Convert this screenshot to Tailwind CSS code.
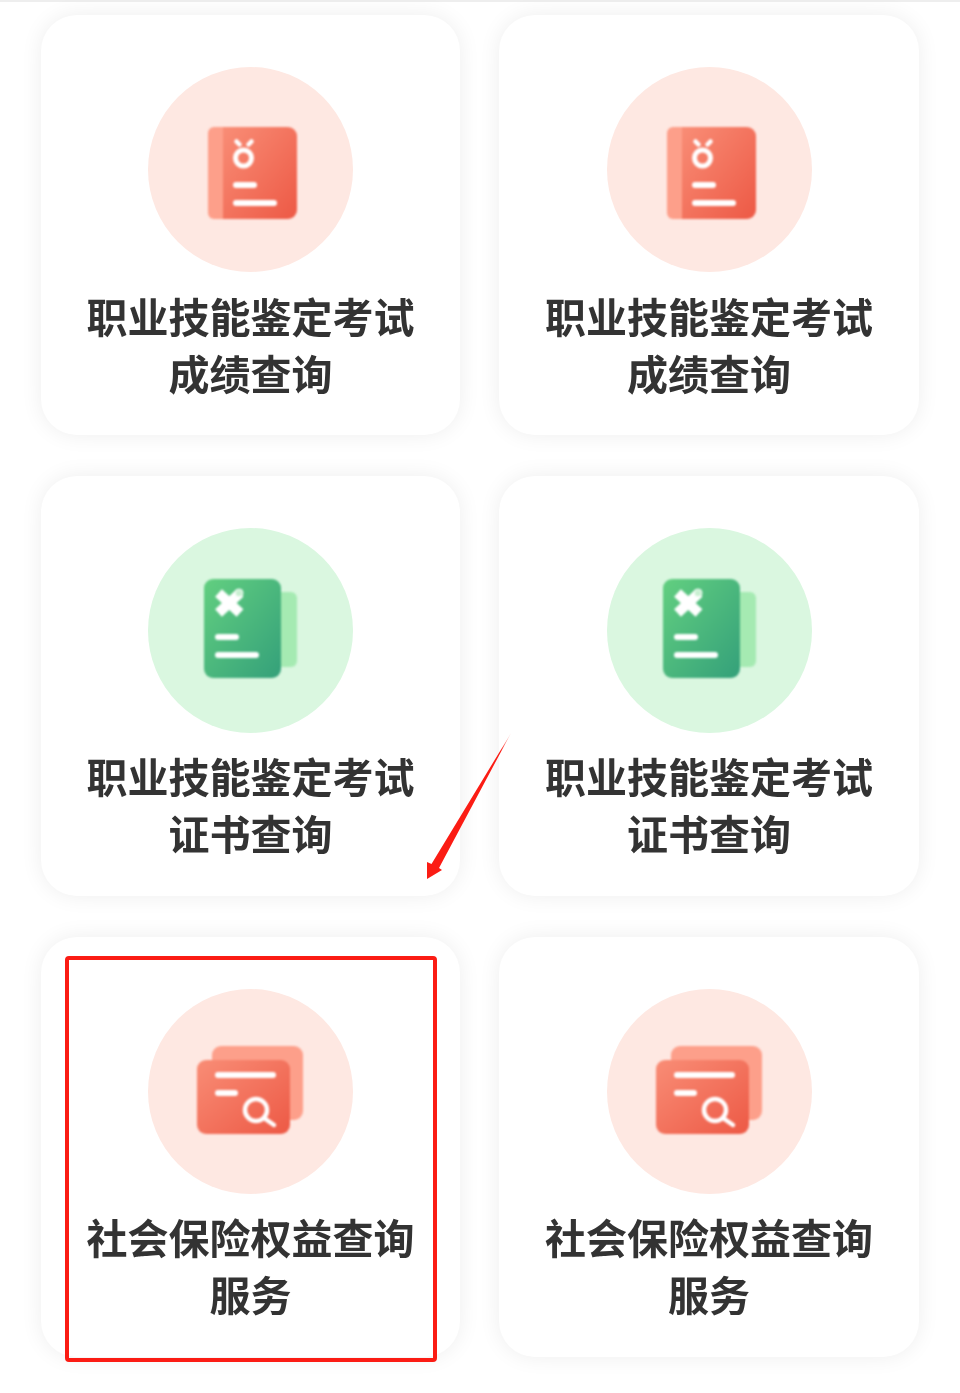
<!DOCTYPE html>
<html lang="zh-CN">
<head>
  <meta charset="UTF-8" />
  <meta name="viewport" content="width=device-width, initial-scale=1.0"/>
  <title>查询服务</title>
  <script src="https://cdn.jsdelivr.net/npm/@tailwindcss/browser@4"></script>
</head>
<body class="bg-white h-[1393px] overflow-hidden relative font-['Noto_Sans_CJK_SC',sans-serif]">

  <!-- shared gradients and icons -->
  <svg class="absolute size-0">
    <defs>
      <linearGradient id="red" x1="0" y1="0" x2="1" y2="1">
        <stop offset="0" stop-color="#f98d76"/>
        <stop offset="1" stop-color="#ed5945"/>
      </linearGradient>
      <linearGradient id="green" x1="0" y1="0" x2="1" y2="1">
        <stop offset="0" stop-color="#62cf80"/>
        <stop offset="1" stop-color="#34a07a"/>
      </linearGradient>
      <symbol id="icon-score" viewBox="0 0 205 205">
        <rect x="60" y="60" width="40" height="92" rx="6" fill="#fd9f8a"/>
        <path d="M75 60h65a9 9 0 0 1 9 9v74a9 9 0 0 1-9 9H75z" fill="url(#red)"/>
        <circle cx="95.500" cy="91" r="8" fill="none" stroke="#fff" stroke-width="5"/>
        <path d="M88.500 74.500l3 3M103.500 74.500l-3 3" stroke="#fff" stroke-width="4.500" stroke-linecap="round"/>
        <rect x="85" y="115" width="24" height="6" rx="3" fill="#fff"/>
        <rect x="85" y="133" width="44" height="6" rx="3" fill="#fff"/>
      </symbol>
      <symbol id="icon-cert" viewBox="0 0 205 205">
        <rect x="120" y="64" width="29" height="75" rx="6" fill="#a5eab2"/>
        <rect x="56" y="51" width="77" height="99" rx="9" fill="url(#green)"/>
        <path d="M70.500 65L92 85M92 65L70.500 85" stroke="#fff" stroke-width="10"/>
        <circle cx="91" cy="65" r="4" fill="#c9f0d2" stroke="#fff" stroke-width="1"/>
        <rect x="67" y="106" width="24" height="6" rx="3" fill="#fff"/>
        <rect x="67" y="124" width="44" height="6" rx="3" fill="#fff"/>
      </symbol>
      <symbol id="icon-search" viewBox="0 0 205 205">
        <rect x="64" y="57" width="91" height="74" rx="9" fill="#fd9f8a"/>
        <rect x="49" y="71" width="93" height="74" rx="9" fill="url(#red)"/>
        <rect x="67" y="83" width="61" height="6" rx="3" fill="#fff"/>
        <rect x="67" y="101" width="23" height="6" rx="3" fill="#fff"/>
        <circle cx="108" cy="121" r="11" fill="none" stroke="#fff" stroke-width="4.500"/>
        <path d="M116 129l10 7" stroke="#fff" stroke-width="4.500" stroke-linecap="round"/>
      </symbol>
    </defs>
  </svg>

  <div class="h-[2px] bg-[#eeeeee]"></div>

  <div class="grid grid-cols-[419px_420px] gap-x-[39px] gap-y-[41px] pl-[41px] pt-[13px]">

    <div class="h-[420px] bg-white rounded-[36px] shadow-[0_0_22px_rgba(0,0,0,0.07)] flex flex-col items-center pt-[52px]">
      <div class="size-[205px] rounded-full bg-[#fee8e2]"><svg class="size-full blur-[0.8px]"><use href="#icon-score"/></svg></div>
      <p class="w-[330px] mt-[15px] text-center text-[#333333] text-[41px] leading-[57px] font-bold blur-[0.4px]">职业技能鉴定考试<br>成绩查询</p>
    </div>
    <div class="h-[420px] bg-white rounded-[36px] shadow-[0_0_22px_rgba(0,0,0,0.07)] flex flex-col items-center pt-[52px]">
      <div class="size-[205px] rounded-full bg-[#fee8e2]"><svg class="size-full blur-[0.8px]"><use href="#icon-score"/></svg></div>
      <p class="w-[330px] mt-[15px] text-center text-[#333333] text-[41px] leading-[57px] font-bold blur-[0.4px]">职业技能鉴定考试<br>成绩查询</p>
    </div>

    <div class="h-[420px] bg-white rounded-[36px] shadow-[0_0_22px_rgba(0,0,0,0.07)] flex flex-col items-center pt-[52px]">
      <div class="size-[205px] rounded-full bg-[#daf7e0]"><svg class="size-full blur-[0.8px]"><use href="#icon-cert"/></svg></div>
      <p class="w-[330px] mt-[14px] text-center text-[#333333] text-[41px] leading-[57px] font-bold blur-[0.4px]">职业技能鉴定考试<br>证书查询</p>
    </div>
    <div class="h-[420px] bg-white rounded-[36px] shadow-[0_0_22px_rgba(0,0,0,0.07)] flex flex-col items-center pt-[52px]">
      <div class="size-[205px] rounded-full bg-[#daf7e0]"><svg class="size-full blur-[0.8px]"><use href="#icon-cert"/></svg></div>
      <p class="w-[330px] mt-[14px] text-center text-[#333333] text-[41px] leading-[57px] font-bold blur-[0.4px]">职业技能鉴定考试<br>证书查询</p>
    </div>

    <div class="h-[420px] bg-white rounded-[36px] shadow-[0_0_22px_rgba(0,0,0,0.07)] flex flex-col items-center pt-[52px]">
      <div class="size-[205px] rounded-full bg-[#fee8e2]"><svg class="size-full blur-[0.8px]"><use href="#icon-search"/></svg></div>
      <p class="w-[330px] mt-[14px] text-center text-[#333333] text-[41px] leading-[57px] font-bold blur-[0.4px]">社会保险权益查询<br>服务</p>
    </div>
    <div class="h-[420px] bg-white rounded-[36px] shadow-[0_0_22px_rgba(0,0,0,0.07)] flex flex-col items-center pt-[52px]">
      <div class="size-[205px] rounded-full bg-[#fee8e2]"><svg class="size-full blur-[0.8px]"><use href="#icon-search"/></svg></div>
      <p class="w-[330px] mt-[14px] text-center text-[#333333] text-[41px] leading-[57px] font-bold blur-[0.4px]">社会保险权益查询<br>服务</p>
    </div>
  </div>

  <!-- annotations drawn on top of the screenshot -->
  <div class="absolute left-[65px] top-[956px] w-[372px] h-[406px] border-4 border-[#fb1c14] rounded-[4px]"></div>
  <svg class="absolute left-[420px] top-[728px] w-[95px] h-[155px]" viewBox="420 728 95 155">
    <defs>
      <linearGradient id="arrow" gradientUnits="userSpaceOnUse" x1="511" y1="733" x2="427" y2="879">
        <stop offset="0" stop-color="#ff6a60" stop-opacity="0.3"/>
        <stop offset="0.12" stop-color="#fb1c14"/>
        <stop offset="1" stop-color="#fb1c14"/>
      </linearGradient>
    </defs>
    <path d="M511 733L439 868L442 870L427 879L427 862L431.500 864z" fill="url(#arrow)"/>
  </svg>
</body>
</html>
